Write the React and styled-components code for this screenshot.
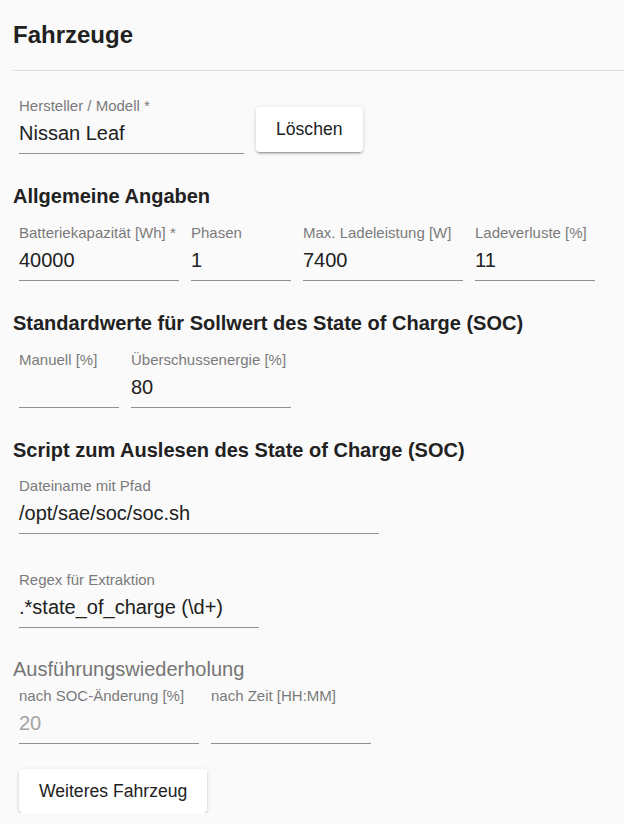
import React from 'react'
import styled, { createGlobalStyle } from 'styled-components'

const GlobalStyle = createGlobalStyle`
  html, body {
    margin: 0;
    padding: 0;
    background: #fafafa;
  }
  body {
    font-family: "Liberation Sans", Arial, sans-serif;
    color: rgba(0, 0, 0, 0.87);
  }
`

const Page = styled.div`
  padding: 20px 0 0 13px;
`

const Title = styled.h2`
  margin: 0;
  font-size: 24px;
  line-height: 30px;
  font-weight: 700;
  color: #212121;
`

const Divider = styled.hr`
  margin: 20px 0 0 0;
  border: none;
  border-top: 1px solid #e0e0e0;
`

const SectionTitle = styled.h3`
  margin: ${p => p.$top || 30}px 0 0 0;
  font-size: 20px;
  line-height: 24px;
  font-weight: ${p => (p.$muted ? 400 : 700)};
  color: ${p => (p.$muted ? '#757575' : '#212121')};
`

const Row = styled.div`
  display: flex;
  align-items: flex-end;
  gap: 12px;
  padding-left: 6px;
  margin-top: ${p => p.$top || 16}px;
`

const FieldBox = styled.div`
  display: flex;
  flex-direction: column;
  width: ${p => p.$w}px;
`

const Label = styled.div`
  font-size: 15px;
  line-height: 16px;
  margin-top: 1px;
  color: #7a7a7a;
  white-space: nowrap;
`

const Value = styled.div`
  margin-top: 7px;
  font-size: 20px;
  line-height: 24px;
  height: 24px;
  padding-bottom: 8px;
  border-bottom: 1px solid #8f8f8f;
  color: ${p => (p.$disabled ? '#a3a3a3' : '#212121')};
  white-space: nowrap;
`

const Button = styled.button`
  font-family: inherit;
  font-size: 17.6px;
  color: #212121;
  background: #fff;
  border: none;
  border-radius: 4px;
  padding: 0 20px;
  height: ${p => p.$h || 45}px;
  margin-bottom: ${p => p.$mb || 0}px;
  box-shadow: 0 3px 1px -2px rgba(0, 0, 0, 0.2), 0 2px 2px 0 rgba(0, 0, 0, 0.14),
    0 1px 5px 0 rgba(0, 0, 0, 0.12);
  cursor: pointer;
`

const Field = ({ label, value, width, disabled }) => (
  <FieldBox $w={width}>
    <Label>{label}</Label>
    <Value $disabled={disabled}>{value}</Value>
  </FieldBox>
)

export default function App() {
  return (
    <>
      <GlobalStyle />
      <Page>
        <Title>Fahrzeuge</Title>
        <Divider />

        <Row $top={26}>
          <Field label="Hersteller / Modell *" value="Nissan Leaf" width={225} />
          <Button $mb={2}>Löschen</Button>
        </Row>

        <SectionTitle>Allgemeine Angaben</SectionTitle>
        <Row>
          <Field label="Batteriekapazität [Wh] *" value="40000" width={160} />
          <Field label="Phasen" value="1" width={100} />
          <Field label="Max. Ladeleistung [W]" value="7400" width={160} />
          <Field label="Ladeverluste [%]" value="11" width={120} />
        </Row>

        <SectionTitle>Standardwerte für Sollwert des State of Charge (SOC)</SectionTitle>
        <Row>
          <Field label="Manuell [%]" value="" width={100} />
          <Field label="Überschussenergie [%]" value="80" width={160} />
        </Row>

        <SectionTitle>Script zum Auslesen des State of Charge (SOC)</SectionTitle>
        <Row $top={15}>
          <Field label="Dateiname mit Pfad" value="/opt/sae/soc/soc.sh" width={360} />
        </Row>
        <Row $top={37}>
          <Field label="Regex für Extraktion" value=".*state_of_charge (\d+)" width={240} />
        </Row>

        <SectionTitle $muted $top={29}>Ausführungswiederholung</SectionTitle>
        <Row $top={6}>
          <Field label="nach SOC-Änderung [%]" value="20" width={180} disabled />
          <Field label="nach Zeit [HH:MM]" value="" width={160} />
        </Row>

        <Row $top={25}>
          <Button $h={44}>Weiteres Fahrzeug</Button>
        </Row>
      </Page>
    </>
  )
}
